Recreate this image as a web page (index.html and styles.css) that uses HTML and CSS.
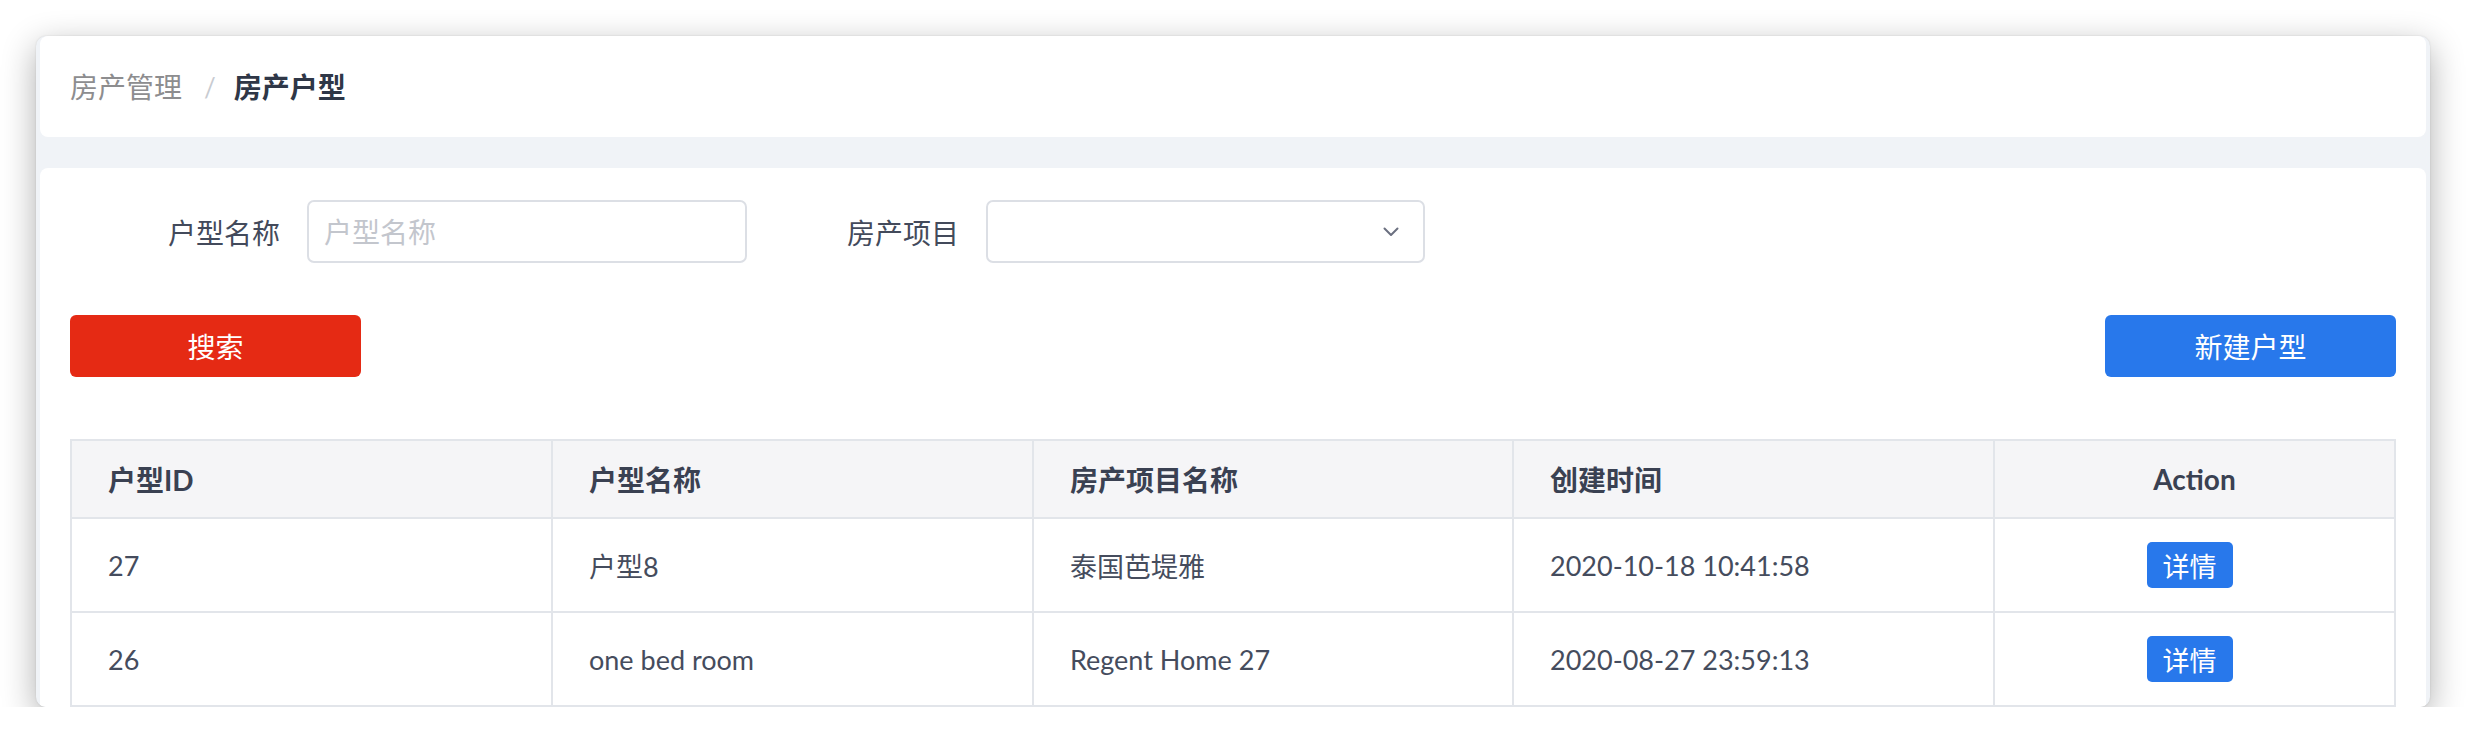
FILE: index.html
```html
<!DOCTYPE html>
<html lang="zh-CN">
<head>
<meta charset="utf-8">
<title>房产户型</title>
<link rel="stylesheet" href="styles.css">
</head>
<body>
<div class="window">
  <div class="card header-card">
    <nav class="breadcrumb">
      <span class="crumb">房产管理</span>
      <span class="sep">/</span>
      <span class="crumb current">房产户型</span>
    </nav>
  </div>
  <div class="card content-card">
    <form class="filter">
      <div class="form-item">
        <label class="form-label">户型名称</label>
        <input class="input" type="text" placeholder="户型名称">
      </div>
      <div class="form-item">
        <label class="form-label">房产项目</label>
        <div class="input select">
          <svg class="chevron" width="16" height="10" viewBox="0 0 16 10"><path d="M1.5 1.5 L8 8 L14.5 1.5" fill="none" stroke="#6b7080" stroke-width="2" stroke-linecap="round" stroke-linejoin="round"/></svg>
        </div>
      </div>
    </form>
    <div class="actions">
      <button class="btn btn-red" type="button">搜索</button>
      <button class="btn btn-blue" type="button">新建户型</button>
    </div>
    <table class="table">
      <colgroup>
        <col class="c1"><col class="c2"><col class="c3"><col class="c4"><col class="c5">
      </colgroup>
      <thead>
        <tr>
          <th>户型ID</th>
          <th>户型名称</th>
          <th>房产项目名称</th>
          <th>创建时间</th>
          <th class="center">Action</th>
        </tr>
      </thead>
      <tbody>
        <tr>
          <td>27</td>
          <td>户型8</td>
          <td>泰国芭堤雅</td>
          <td>2020-10-18 10:41:58</td>
          <td class="center"><button class="btn-mini" type="button">详情</button></td>
        </tr>
        <tr>
          <td>26</td>
          <td>one bed room</td>
          <td>Regent Home 27</td>
          <td>2020-08-27 23:59:13</td>
          <td class="center"><button class="btn-mini" type="button">详情</button></td>
        </tr>
      </tbody>
    </table>
  </div>
</div>
</body>
</html>
```

FILE: styles.css
```css
* { box-sizing: border-box; }

html, body {
  margin: 0;
  padding: 0;
  background: #ffffff;
}

body {
  padding: 36px 36px 0 36px;
  font-family: "Lato", "Noto Sans CJK SC", sans-serif;
  font-size: 28px;
  color: #3f4658;
  overflow: hidden;
}

.window {
  width: 2394px;
  height: 671px;
  background: #f0f3f7;
  border-radius: 10px;
  padding: 0 4px;
  overflow: hidden;
  display: flex;
  flex-direction: column;
  gap: 31px;
  box-shadow: 0 10px 34px rgba(0, 0, 0, 0.32), 0 0 2px rgba(0, 0, 0, 0.12);
}

.card {
  background: #ffffff;
  border-radius: 8px;
}

.header-card {
  height: 101px;
  flex: none;
  display: flex;
  align-items: center;
  padding: 0 30px;
}

.breadcrumb {
  display: flex;
  align-items: center;
  font-size: 28px;
  line-height: 1;
}

.crumb { color: #8d8d8f; }

.crumb.current {
  color: #2f3747;
  font-weight: 700;
}

.sep {
  color: #c8cbd1;
  margin: 0 18px 0 22px;
  font-size: 26px;
}

.content-card {
  flex: 1;
  padding: 32px 30px 0 30px;
  border-bottom-left-radius: 0;
  border-bottom-right-radius: 0;
}

.filter {
  display: flex;
  margin: 0;
}

.form-item {
  display: flex;
  align-items: center;
  margin-right: 2px;
}

.form-label {
  width: 237px;
  padding-right: 27px;
  text-align: right;
  color: #434a5b;
  font-size: 28px;
}

.input {
  width: 440px;
  height: 63px;
  border: 2px solid #dcdfe5;
  border-radius: 7px;
  background: #fff;
  font-family: "Lato", "Noto Sans CJK SC", sans-serif;
  font-size: 28px;
  padding: 0 15px;
  color: #3f4658;
  outline: none;
}

.input::placeholder { color: #c3c6cd; }

.select {
  width: 439px;
  display: flex;
  align-items: center;
  justify-content: flex-end;
  padding-right: 24px;
}

.chevron { display: block; }

.actions {
  display: flex;
  justify-content: space-between;
  margin-top: 52px;
}

.btn {
  width: 291px;
  height: 62px;
  border: none;
  border-radius: 6px;
  color: #fff;
  font-family: "Lato", "Noto Sans CJK SC", sans-serif;
  font-size: 28px;
  padding: 0;
  cursor: pointer;
}

.btn-red { background: #e52a14; }
.btn-blue { background: #2878eb; }

.table {
  margin-top: 62px;
  width: 100%;
  border-collapse: collapse;
  table-layout: fixed;
  border: 2px solid #d6d9df;
}

.c1, .c2, .c4 { width: 481px; }
.c3 { width: 480px; }
.c5 { width: auto; }

.table th,
.table td {
  border: 2px solid #e2e5ea;
  text-align: left;
  padding: 0 36px;
  white-space: nowrap;
}

.table th {
  height: 78px;
  background: #f5f5f7;
  color: #3a4152;
  font-weight: 700;
  font-size: 28px;
}

.table td {
  height: 94px;
  color: #454c5d;
  font-size: 27px;
}

.table .center { text-align: center; }

.btn-mini {
  width: 86px;
  height: 46px;
  margin-right: 10px;
  border: none;
  border-radius: 5px;
  background: #2878eb;
  color: #fff;
  font-family: "Lato", "Noto Sans CJK SC", sans-serif;
  font-size: 27px;
  padding: 0;
  vertical-align: middle;
}
```
